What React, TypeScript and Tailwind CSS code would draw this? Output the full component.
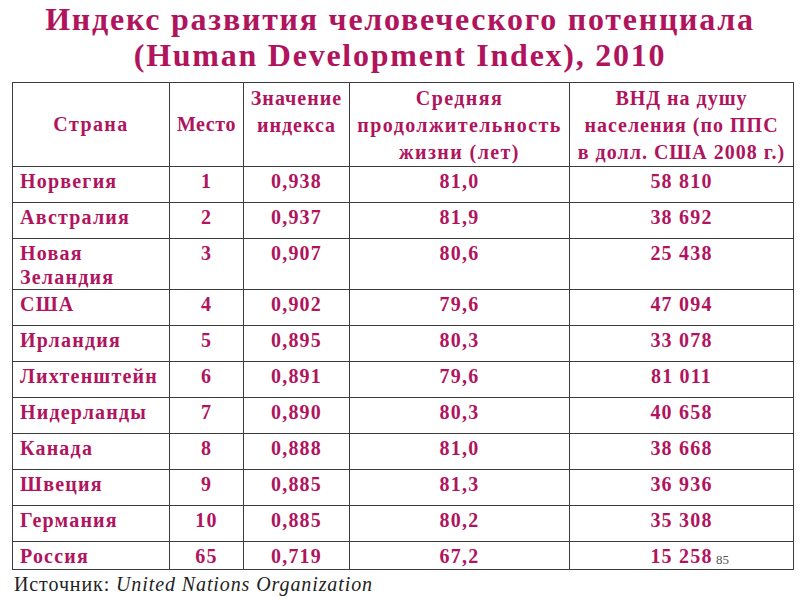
import React from "react";

const rows: [string, string, string, string, string][] = [
  ["Норвегия", "1", "0,938", "81,0", "58 810"],
  ["Австралия", "2", "0,937", "81,9", "38 692"],
  ["Новая Зеландия", "3", "0,907", "80,6", "25 438"],
  ["США", "4", "0,902", "79,6", "47 094"],
  ["Ирландия", "5", "0,895", "80,3", "33 078"],
  ["Лихтенштейн", "6", "0,891", "79,6", "81 011"],
  ["Нидерланды", "7", "0,890", "80,3", "40 658"],
  ["Канада", "8", "0,888", "81,0", "38 668"],
  ["Швеция", "9", "0,885", "81,3", "36 936"],
  ["Германия", "10", "0,885", "80,2", "35 308"],
  ["Россия", "65", "0,719", "67,2", "15 258"],
];

const heights = ["h-[36px]", "h-[36px]", "h-[49px]", "h-[36px]", "h-[36px]", "h-[36px]", "h-[36px]", "h-[36px]", "h-[36px]", "h-[36px]", "h-[28px]"];

export default function App() {
  return (
    <div
      className="relative w-[800px] h-[600px] bg-white overflow-hidden text-[#b0145d]"
      style={{ fontFamily: '"Liberation Serif", "Times New Roman", serif' }}
    >
      <div className="pt-[1px] text-center font-bold text-[32px] leading-[36px] tracking-[1.75px]">
        <div>Индекс развития человеческого потенциала</div>
        <div>(Human Development Index), 2010</div>
      </div>
      <div className="pl-[12px] pt-[9px]">
        <table className="border-collapse table-fixed w-[781px] font-bold text-[20px] tracking-[1.2px]">
          <colgroup>
            <col className="w-[157px]" />
            <col className="w-[74px]" />
            <col className="w-[106px]" />
            <col className="w-[220px]" />
            <col className="w-[224px]" />
          </colgroup>
          <thead>
            <tr className="h-[82px] leading-[27px] tracking-[1.4px]">
              <th className="border border-[#3c3c3c] align-middle font-bold">Страна</th>
              <th className="border border-[#3c3c3c] align-middle font-bold tracking-[0.6px]">Место</th>
              <th className="border border-[#3c3c3c] align-top pt-[2px] font-bold tracking-[1px]">Значение<br />индекса</th>
              <th className="border border-[#3c3c3c] align-top pt-[2px] font-bold">Средняя<br />продолжительность<br />жизни (лет)</th>
              <th className="border border-[#3c3c3c] align-top pt-[2px] font-bold tracking-[1px]">ВНД на душу<br />населения (по ППС<br />в долл. США 2008 г.)</th>
            </tr>
          </thead>
          <tbody>
            {rows.map((r, i) => (
              <tr key={i} className={`${heights[i]} leading-[24px]`}>
                <td className="border border-[#3c3c3c] align-top pt-[2px] pl-[7px] pr-[30px]">{r[0]}</td>
                <td className="border border-[#3c3c3c] align-top pt-[2px] text-center">{r[1]}</td>
                <td className="border border-[#3c3c3c] align-top pt-[2px] text-center">{r[2]}</td>
                <td className="border border-[#3c3c3c] align-top pt-[2px] text-center">{r[3]}</td>
                <td className="border border-[#3c3c3c] align-top pt-[2px] text-center">{r[4]}</td>
              </tr>
            ))}
          </tbody>
        </table>
      </div>
      <div className="absolute left-[716px] top-[553px] text-[13px] leading-[14px] text-[#555]">85</div>
      <div className="pl-[14px] text-[20px] leading-[28px] tracking-[0.9px] text-[#222]">
        Источник: <span className="italic">United Nations Organization</span>
      </div>
    </div>
  );
}
